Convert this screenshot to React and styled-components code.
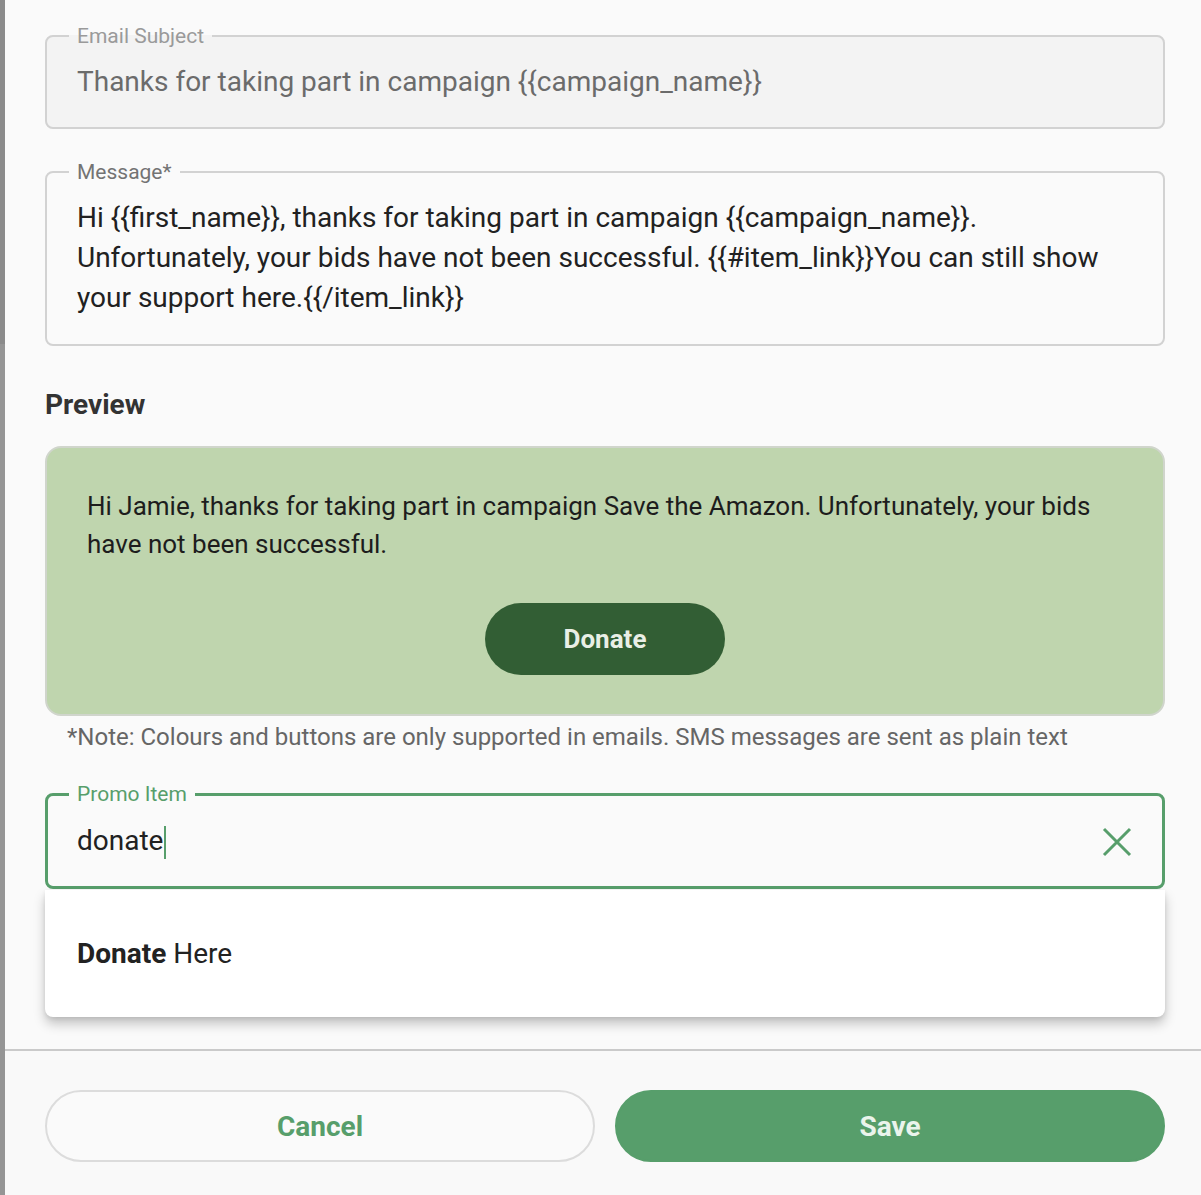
import React from "react";
import styled, { createGlobalStyle } from "styled-components";

const GREEN = "#579e6b";

const GlobalStyle = createGlobalStyle`
  html, body {
    margin: 0;
    padding: 0;
    background: #fafafa;
    font-family: Roboto, "Liberation Sans", Arial, sans-serif;
  }
  * { box-sizing: border-box; }
`;

const Page = styled.div`
  display: flex;
  width: 1201px;
  height: 1195px;
  overflow: hidden;
  background: #fafafa;
`;

const Strip = styled.div`
  width: 5px;
  flex: none;
  background: linear-gradient(#8b8b8b 0, #8b8b8b 344px, #959595 344px);
`;

const Main = styled.div`
  flex: 1;
  display: flex;
  flex-direction: column;
`;

const Body = styled.div`
  padding: 24px 36px 0 40px;
  display: flex;
  flex-direction: column;
`;

const Field = styled.fieldset`
  margin: 0 0 ${p => p.$mb || 0}px;
  min-width: 0;
  padding: 0 ${p => (p.$focused ? 21 : 22)}px;
  border: ${p => (p.$focused ? `3px solid ${GREEN}` : "2px solid #d2d2d2")};
  border-radius: 8px;
  background: ${p => (p.$disabled ? "#f3f3f3" : "#fafafa")};
`;

const Legend = styled.legend`
  padding: 0 8px;
  font-size: 21px;
  line-height: 24px;
  color: ${p => p.$color};
`;

const FieldValue = styled.div`
  padding: ${p => p.$pad};
  padding-left: 8px;
  font-size: 28px;
  line-height: ${p => p.$lh || 32}px;
  color: ${p => p.$color || "#212121"};
  display: flex;
  align-items: center;
`;

const Caret = styled.span`
  display: inline-block;
  width: 2px;
  height: 33px;
  background: ${GREEN};
  vertical-align: middle;
  margin-left: 1px;
`;

const ClearButton = styled.button`
  margin-left: auto;
  margin-right: 8px;
  border: 0;
  background: none;
  padding: 0;
  display: flex;
  color: ${GREEN};
`;

const Heading = styled.h2`
  margin: 43px 0 25px;
  font-size: 28px;
  line-height: 32px;
  font-weight: 700;
  color: #333;
`;

const PreviewBox = styled.div`
  border: 2px solid #d0d5cc;
  border-radius: 16px;
  background: #bfd5ae;
  padding: 39px 40px 39px;
  display: flex;
  flex-direction: column;
  align-items: center;
`;

const PreviewText = styled.p`
  margin: 0 0 40px;
  align-self: stretch;
  font-size: 26px;
  line-height: 38px;
  color: #1d1d1d;
`;

const DonateButton = styled.button`
  width: 240px;
  height: 72px;
  border: 0;
  border-radius: 36px;
  background: #325e34;
  color: #e9efe6;
  font-family: inherit;
  font-size: 26px;
  font-weight: 700;
`;

const Note = styled.p`
  margin: 7px 0 31px 22px;
  font-size: 24px;
  line-height: 28px;
  color: #666;
`;

const Dropdown = styled.div`
  margin-top: 1px;
  height: 127px;
  background: #fff;
  border-radius: 0 0 8px 8px;
  box-shadow: 0 7px 12px rgba(0, 0, 0, 0.22), 0 2px 4px rgba(0, 0, 0, 0.08);
  padding: 0 32px;
  display: flex;
  align-items: center;
  font-size: 28px;
  color: #222;
`;

const Divider = styled.div`
  margin-top: 32px;
  height: 2px;
  background: #cacaca;
`;

const Footer = styled.div`
  display: flex;
  gap: 20px;
  padding: 39px 36px 0 40px;
  background: #f9f9f9;
  flex: 1;
`;

const FooterButton = styled.button`
  flex: 1 1 0;
  min-width: 0;
  height: 72px;
  padding: 0;
  border-radius: 36px;
  font-family: inherit;
  font-size: 28px;
  font-weight: 700;
  border: 2px solid ${p => (p.$primary ? GREEN : "#dcdcdc")};
  background: ${p => (p.$primary ? GREEN : "#fafafa")};
  color: ${p => (p.$primary ? "#eaf4ec" : GREEN)};
`;

export default function App() {
  return (
    <>
      <GlobalStyle />
      <Page>
        <Strip />
        <Main>
          <Body>
            <Field $disabled $mb={31}>
              <Legend $color="#9a9a9a">Email Subject</Legend>
              <FieldValue $pad="18px 0 29px" $color="#6b6b6b">
                {"Thanks for taking part in campaign {{campaign_name}}"}
              </FieldValue>
            </Field>

            <Field>
              <Legend $color="#737373">Message*</Legend>
              <FieldValue $pad="14px 0 26px" $lh={40}>
                <span>
                  {"Hi {{first_name}}, thanks for taking part in campaign {{campaign_name}}. Unfortunately, your bids have not been successful. {{#item_link}}You can still show your support here.{{/item_link}}"}
                </span>
              </FieldValue>
            </Field>

            <Heading>Preview</Heading>

            <PreviewBox>
              <PreviewText>
                Hi Jamie, thanks for taking part in campaign Save the Amazon. Unfortunately, your bids have not been successful.
              </PreviewText>
              <DonateButton>Donate</DonateButton>
            </PreviewBox>

            <Note>*Note: Colours and buttons are only supported in emails. SMS messages are sent as plain text</Note>

            <Field $focused>
              <Legend $color={GREEN}>Promo Item</Legend>
              <FieldValue $pad="19px 0 27px">
                <span>
                  donate
                  <Caret />
                </span>
                <ClearButton aria-label="Clear">
                  <svg width="32" height="32" viewBox="0 0 32 32" fill="none" stroke="currentColor" strokeWidth="3">
                    <path d="M3 3 L29 29 M29 3 L3 29" />
                  </svg>
                </ClearButton>
              </FieldValue>
            </Field>

            <Dropdown>
              <span>
                <b>Donate</b> Here
              </span>
            </Dropdown>
          </Body>
          <Divider />
          <Footer>
            <FooterButton>Cancel</FooterButton>
            <FooterButton $primary>Save</FooterButton>
          </Footer>
        </Main>
      </Page>
    </>
  );
}
